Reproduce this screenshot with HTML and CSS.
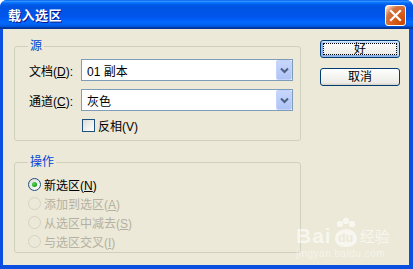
FILE: index.html
```html
<!DOCTYPE html>
<html lang="zh-CN">
<head>
  <meta charset="UTF-8" />
  <title>载入选区</title>
  <link rel="stylesheet" href="styles.css">
</head>
<body>

  <div class="window">
    <div class="titlebar">
      <span class="title">载入选区</span>
      <span class="close">
        <svg width="21" height="21" viewBox="0 0 21 21"><path d="M6 6 L15 15 M15 6 L6 15" stroke="#fff" stroke-width="2.2" stroke-linecap="square"/></svg>
      </span>
    </div>

    <div class="client">
      <div class="groups">
        <div class="group source">
          <span class="legend">源</span>
          <div class="row">
            <span class="label">文档(<u>D</u>):</span>
            <div class="select"><span class="value">01 副本</span><span class="arrow"><svg width="9" height="7" viewBox="0 0 9 7"><path d="M1 1.5 L4.5 5 L8 1.5" fill="none" stroke="#4d6185" stroke-width="2"/></svg></span></div>
          </div>
          <div class="row">
            <span class="label">通道(<u>C</u>):</span>
            <div class="select"><span class="value">灰色</span><span class="arrow"><svg width="9" height="7" viewBox="0 0 9 7"><path d="M1 1.5 L4.5 5 L8 1.5" fill="none" stroke="#4d6185" stroke-width="2"/></svg></span></div>
          </div>
          <div class="check-row"><span class="checkbox"></span><span>反相(V)</span></div>
        </div>

        <div class="group ops">
          <span class="legend">操作</span>
          <div class="radio-row"><span class="radio checked"></span><span>新选区(<u>N</u>)</span></div>
          <div class="radio-row disabled"><span class="radio"></span><span>添加到选区(<u>A</u>)</span></div>
          <div class="radio-row disabled"><span class="radio"></span><span>从选区中减去(<u>S</u>)</span></div>
          <div class="radio-row disabled"><span class="radio"></span><span>与选区交叉(<u>I</u>)</span></div>
        </div>
      </div>

      <div class="buttons">
        <button class="btn default">好</button>
        <button class="btn">取消</button>
      </div>

      <div class="watermark">
        <div class="wm-top"><span class="wm-bai">Bai</span><span class="wm-paw">du</span><span class="wm-cn">经验</span></div>
        <div class="wm-url">jingyan.baidu.com</div>
      </div>
    </div>
  </div>

</body>
</html>
```

FILE: styles.css
```css
body {
  margin: 0;
  padding: 0;
  font-family: "Liberation Sans", "Noto Sans CJK SC", sans-serif;
  font-size: 12px;
  color: #000;
}

.window {
  width: 413px;
  height: 269px;
  box-sizing: border-box;
  background: #0b4fe0;
  border-radius: 7px 7px 0 0;
  overflow: hidden;
  display: flex;
  flex-direction: column;
  position: relative;
}

.titlebar {
  height: 29px;
  flex: none;
  display: flex;
  align-items: center;
  justify-content: space-between;
  padding: 0 7px 0 8px;
  background: linear-gradient(to bottom, #0058ee 0%, #3593ff 4%, #288eff 6%, #127dff 8%, #036ffc 10%, #0262ee 14%, #0057e5 20%, #0054e3 24%, #0055eb 56%, #005bf5 66%, #026afe 76%, #0062ef 86%, #0052d6 92%, #0040ab 94%, #003092 100%);
}

.title {
  color: #fff;
  font-weight: bold;
  font-size: 13px;
  letter-spacing: 0.5px;
  text-shadow: 1px 1px #0f1089;
}

.close {
  width: 21px;
  height: 21px;
  box-sizing: border-box;
  border: 1px solid #fff;
  border-radius: 3px;
  background: radial-gradient(circle at 90% 90%, #cc4600 0%, #dc6527 55%, #cd7546 70%, #ffccb2 90%, #fff 100%);
  display: flex;
  align-items: center;
  justify-content: center;
  margin-top: 2px;
}

.close svg {
  margin: -1px;
}

.client {
  flex: 1;
  margin: 0 4px 4px 3px;
  background: #ece9d8;
  display: flex;
  align-items: flex-start;
  position: relative;
}

.groups {
  margin: 17px 0 0 11px;
  width: 287px;
}

.group {
  position: relative;
  box-sizing: border-box;
  border: 1px solid #d0d0bf;
  border-radius: 3px;
}

.legend {
  position: absolute;
  top: -9px;
  left: 13px;
  padding: 0 2px;
  background: #ece9d8;
  color: #0046d5;
  line-height: 16px;
}

.source {
  height: 95px;
  padding: 12px 7px 0 14px;
}

.row {
  display: flex;
  align-items: center;
  margin-bottom: 8px;
}

.label {
  width: 52px;
  flex: none;
}

.select {
  flex: 1;
  height: 22px;
  box-sizing: border-box;
  border: 1px solid #7f9db9;
  background: #fff;
  display: flex;
  align-items: center;
  justify-content: space-between;
}

.value {
  padding-left: 5px;
}

.arrow {
  width: 16px;
  height: 20px;
  box-sizing: border-box;
  border: 1px solid #c3d3fd;
  border-radius: 2px;
  background: linear-gradient(to bottom, #c7d6fc 0%, #b9cbf8 60%, #aec4f6 100%);
  display: flex;
  align-items: center;
  justify-content: center;
}

.check-row {
  display: flex;
  align-items: center;
  gap: 3px;
  margin-left: 53px;
  height: 13px;
}

.checkbox {
  width: 13px;
  height: 13px;
  box-sizing: border-box;
  border: 1px solid #1c5180;
  background: linear-gradient(135deg, #dcdcd7 0%, #fff 100%);
}

.ops {
  height: 91px;
  margin-top: 21px;
  padding: 12px 0 0 13px;
}

.radio-row {
  display: flex;
  align-items: center;
  gap: 3px;
  height: 19px;
}

.radio {
  width: 13px;
  height: 13px;
  box-sizing: border-box;
  border: 1px solid #1c5180;
  border-radius: 50%;
  background: linear-gradient(135deg, #dcdcd7 0%, #fff 100%);
  display: flex;
  align-items: center;
  justify-content: center;
}

.radio.checked::after {
  content: "";
  width: 5px;
  height: 5px;
  border-radius: 50%;
  background: radial-gradient(circle at 35% 35%, #55d551 0%, #21a121 70%);
}

.disabled {
  color: #b5b1a2;
}

.disabled .radio {
  border-color: #d6d3c6;
  background: #ece9d8;
}

.buttons {
  margin: 11px 0 0 19px;
  width: 80px;
  display: flex;
  flex-direction: column;
  gap: 10px;
}

.btn {
  height: 18px;
  padding: 0;
  font-family: inherit;
  font-size: 12px;
  border: 1px solid #003c74;
  border-radius: 3px;
  background: linear-gradient(to bottom, #fff 0%, #ecebe6 86%, #d6d0c5 100%);
  line-height: 14px;
}

.btn.default {
  box-shadow: inset -1px 1px #cee7ff, inset 1px -1px #98b8ea, inset -2px 2px #bcd4f6, inset 2px -2px #89ade4;
  outline: 1px dotted #000;
  outline-offset: -4px;
}

.watermark {
  position: absolute;
  left: 293px;
  top: 188px;
  color: rgba(255, 255, 255, 0.6);
}

.wm-top {
  display: flex;
  align-items: flex-end;
  height: 30px;
}

.wm-bai {
  font-size: 21px;
  font-weight: bold;
  line-height: 22px;
  letter-spacing: 1px;
}

.wm-paw {
  width: 22px;
  height: 18px;
  margin: 0 3px;
  border-radius: 50% 50% 45% 45%;
  background: rgba(255, 255, 255, 0.6);
  color: #ece9d8;
  font-size: 12px;
  font-weight: bold;
  text-align: center;
  line-height: 18px;
  position: relative;
}

.wm-paw::before {
  content: "";
  position: absolute;
  left: 2px;
  top: -11px;
  width: 18px;
  height: 9px;
  background: radial-gradient(circle at 3px 6px, rgba(255, 255, 255, 0.6) 3px, transparent 3.5px),
              radial-gradient(circle at 15px 6px, rgba(255, 255, 255, 0.6) 3px, transparent 3.5px),
              radial-gradient(circle at 9px 3px, rgba(255, 255, 255, 0.6) 3px, transparent 3.5px);
}

.wm-cn {
  font-size: 15px;
  line-height: 20px;
}

.wm-url {
  font-size: 10px;
  color: rgba(255, 255, 255, 0.5);
  letter-spacing: 0.5px;
  margin-top: 1px;
}
```
